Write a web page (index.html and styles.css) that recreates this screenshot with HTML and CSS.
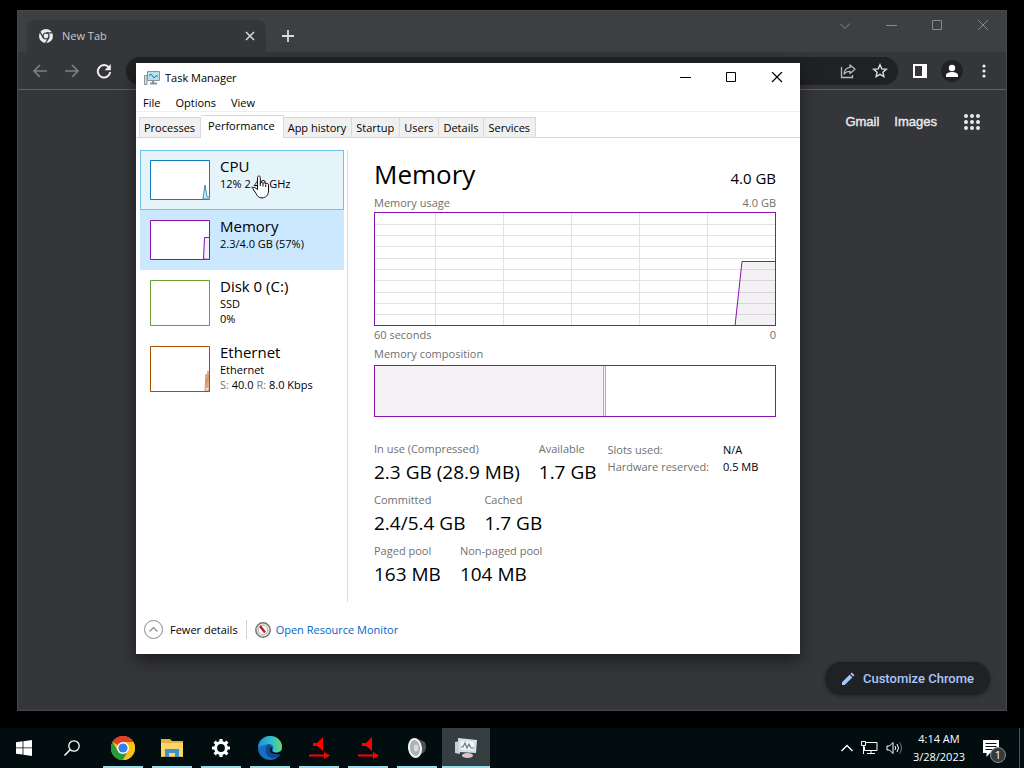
FILE: index.html
```
<!DOCTYPE html>
<html lang="en">
<head>
  <meta charset="UTF-8">
  <meta name="viewport" content="width=device-width, initial-scale=1.0">
  <title>Desktop</title>
  <link rel="stylesheet" href="styles.css">
</head>
<body>
<div class="desktop">

  <!-- browser -->
  <section class="chrome">
    <div class="tabstrip">
      <div class="ctab">
        <svg width="16" height="16" viewBox="0 0 16 16"><circle cx="8" cy="8" r="7" fill="#e8eaed"/><circle cx="8" cy="8" r="3.6" fill="#35363a"/><circle cx="8" cy="8" r="2.4" fill="#e8eaed"/><path d="M8 4.8h6.5M5.2 9.6L2 4M10.8 9.6L7.6 15" stroke="#35363a" stroke-width="1.2"/></svg>
        <span class="ctab-title">New Tab</span>
        <button class="icon-btn" aria-label="Close tab"><svg width="10" height="10" viewBox="0 0 10 10"><path d="M1 1l8 8M9 1L1 9" stroke="#dadce0" stroke-width="1.5"/></svg></button>
      </div>
      <button class="icon-btn newtab" aria-label="New tab"><svg width="14" height="14" viewBox="0 0 14 14"><path d="M7 1v12M1 7h12" stroke="#dadce0" stroke-width="1.8"/></svg></button>
      <div class="chrome-ctrl">
        <button class="icon-btn" aria-label="Search tabs"><svg width="12" height="12" viewBox="0 0 12 12"><path d="M1 3.5l5 5 5-5" fill="none" stroke="#85888c"/></svg></button>
        <button class="icon-btn" aria-label="Minimize"><svg width="12" height="12" viewBox="0 0 12 12"><path d="M1 5.5h11" stroke="#85888c"/></svg></button>
        <button class="icon-btn" aria-label="Maximize"><svg width="12" height="12" viewBox="0 0 12 12"><path d="M1.5.5h9v9h-9z" fill="none" stroke="#85888c"/></svg></button>
        <button class="icon-btn" aria-label="Close"><svg width="12" height="12" viewBox="0 0 12 12"><path d="M1 0l10 10M11 0L1 10" stroke="#85888c"/></svg></button>
      </div>
    </div>
    <div class="toolbar">
      <button class="icon-btn" aria-label="Back"><svg width="16" height="16" viewBox="0 0 16 16"><path d="M15 8H2M8 2L2 8l6 6" fill="none" stroke="#7d8084" stroke-width="1.7"/></svg></button>
      <button class="icon-btn" aria-label="Forward"><svg width="16" height="16" viewBox="0 0 16 16"><path d="M1 8h13M8 2l6 6-6 6" fill="none" stroke="#7d8084" stroke-width="1.7"/></svg></button>
      <button class="icon-btn" aria-label="Reload"><svg width="16" height="16" viewBox="0 0 16 16"><path d="M13 4.6A6.2 6.2 0 1 0 14.2 9" fill="none" stroke="#eee" stroke-width="2"/><path d="M14.8 1v6.2H8.6z" fill="#eee"/></svg></button>
      <div class="omnibox">
        <button class="icon-btn" aria-label="Share"><svg width="16" height="16" viewBox="0 0 16 16"><path d="M1.5 4v10.500H12.500V12" fill="none" stroke="#b8babd" stroke-width="1.3"/><path d="M10 2l5 4.300-5 4.200V8.300c-2.500 0-4.500.7-6 2.700.4-3.700 2.500-6.200 6-6.600z" fill="none" stroke="#b8babd" stroke-width="1.3" stroke-linejoin="round"/></svg></button>
        <button class="icon-btn" aria-label="Bookmark"><svg width="16" height="16" viewBox="0 0 16 16"><path d="M8 1.800l1.800 4.100 4.500.4-3.400 2.900 1 4.400L8 11.300l-3.900 2.300 1-4.400-3.400-2.900 4.500-.4z" fill="none" stroke="#dadce0" stroke-width="1.4"/></svg></button>
      </div>
      <button class="icon-btn" aria-label="Side panel"><svg width="14" height="14" viewBox="0 0 14 14"><path d="M0 0h14v14H0zM2 2v10h7V2z" fill="#fff" fill-rule="evenodd"/></svg></button>
      <button class="icon-btn profile" aria-label="Profile"><svg width="14" height="14" viewBox="0 0 14 14"><circle cx="7" cy="4" r="3.200" fill="#fff"/><path d="M1 13v-2c0-2 3.500-3 6-3s6 1 6 3v2z" fill="#fff"/></svg></button>
      <button class="icon-btn" aria-label="Menu"><svg width="4" height="14" viewBox="0 0 4 14"><circle cx="2" cy="2" r="1.600" fill="#eee"/><circle cx="2" cy="7" r="1.600" fill="#eee"/><circle cx="2" cy="12" r="1.600" fill="#eee"/></svg></button>
    </div>
    <div class="ntp">
      <nav class="ntp-links">
        <a href="#">Gmail</a>
        <a href="#">Images</a>
        <button class="icon-btn" aria-label="Google apps"><svg width="16" height="16" viewBox="0 0 16 16" fill="#e8eaed"><circle cx="2" cy="2" r="2"/><circle cx="8" cy="2" r="2"/><circle cx="14" cy="2" r="2"/><circle cx="2" cy="8" r="2"/><circle cx="8" cy="8" r="2"/><circle cx="14" cy="8" r="2"/><circle cx="2" cy="14" r="2"/><circle cx="8" cy="14" r="2"/><circle cx="14" cy="14" r="2"/></svg></button>
      </nav>
      <button class="customize"><svg width="14" height="14" viewBox="0 0 14 14" fill="#a8c7fa"><path d="M1 10.300L8.600 2.700l2.700 2.700L3.700 13H1zM9.400 1.900L10.800.5l2.700 2.700-1.400 1.400z"/></svg>Customize Chrome</button>
    </div>
  </section>

  <!-- task manager -->
  <section class="tm">
    <header class="tm-title">
      <svg width="16" height="14" viewBox="0 0 16 14"><path d="M.5 4.500h2.500v9H.5z" fill="#d7dcdf" stroke="#899399"/><path d="M3.500.5h12v9h-12z" fill="#b6e0ee" stroke="#87969e"/><path d="M5 5l2-2 3 4 2-2h2" fill="none" stroke="#267b98"/><path d="M9 10v2M6 12.500h7" stroke="#899399" stroke-width="2"/></svg>
      <h1>Task Manager</h1>
      <div class="tm-ctrl">
        <button class="icon-btn" aria-label="Minimize"><svg width="12" height="12" viewBox="0 0 12 12"><path d="M1 5.500h11" stroke="#000"/></svg></button>
        <button class="icon-btn" aria-label="Maximize"><svg width="12" height="12" viewBox="0 0 12 12"><path d="M1.500.5h9v9h-9z" fill="none" stroke="#000"/></svg></button>
        <button class="icon-btn" aria-label="Close"><svg width="12" height="12" viewBox="0 0 12 12"><path d="M1 0l10 10M11 0L1 10" stroke="#000" stroke-width="1.200"/></svg></button>
      </div>
    </header>
    <nav class="tm-menu">
      <button>File</button>
      <button>Options</button>
      <button>View</button>
    </nav>
    <div class="tm-tabs" role="tablist">
      <button role="tab">Processes</button>
      <button role="tab" class="active" aria-selected="true">Performance</button>
      <button role="tab">App history</button>
      <button role="tab">Startup</button>
      <button role="tab">Users</button>
      <button role="tab">Details</button>
      <button role="tab">Services</button>
    </div>
    <div class="tm-body">
      <div class="side">
        <button class="item hover">
          <svg class="thumb" width="60" height="40" viewBox="0 0 60 40"><path d="M.5.5h59v39H.5z" fill="#fff" stroke="#117dbb"/><path d="M53 39l2-14 2 12h3v2z" fill="#d5eaf4" stroke="#3c8fb5"/></svg>
          <span class="item-text"><b>CPU</b><span>12% 2.40 GHz</span></span>
        </button>
        <button class="item selected">
          <svg class="thumb" width="60" height="40" viewBox="0 0 60 40"><path d="M.5.5h59v39H.5z" fill="#fff" stroke="#8b12ae"/><path d="M53.500 39l1-21.500H59.500V39.500z" fill="#f6eef8" stroke="#8b12ae"/></svg>
          <span class="item-text"><b>Memory</b><span>2.3/4.0 GB (57%)</span></span>
        </button>
        <button class="item">
          <svg class="thumb" width="60" height="46" viewBox="0 0 60 46"><path d="M.5.5h59v45H.5z" fill="#fff" stroke="#6aa03a"/></svg>
          <span class="item-text"><b>Disk 0 (C:)</b><span>SSD</span><span>0%</span></span>
        </button>
        <button class="item">
          <svg class="thumb" width="60" height="46" viewBox="0 0 60 46"><path d="M55 45l1-17 1 14 1-17 1 15v5z" fill="#f8d8c6" stroke="#dd9068"/><path d="M.5.5h59v45H.5z" fill="none" stroke="#a74f01"/></svg>
          <span class="item-text"><b>Ethernet</b><span>Ethernet</span><span><i>S:</i> 40.0 <i>R:</i> 8.0 Kbps</span></span>
        </button>
      </div>
      <main class="detail">
        <div class="detail-head">
          <h2>Memory</h2>
          <span>4.0 GB</span>
        </div>
        <div class="caption"><span>Memory usage</span><span>4.0 GB</span></div>
        <svg class="chart" viewBox="0 0 400 112" preserveAspectRatio="none">
          <path class="grid" d="M60.500 0v112M128.500 0v112M196.500 0v112M264.500 0v112M332.500 0v112M0 11.500h400M0 22.500h400M0 33.500h400M0 45.500h400M0 56.500h400M0 67.500h400M0 79.500h400M0 90.500h400M0 101.500h400"/>
          <path class="usage" d="M360 113L367 48.500H401V113z"/>
        </svg>
        <div class="caption axis"><span>60 seconds</span><span>0</span></div>
        <div class="caption comp"><span>Memory composition</span></div>
        <div class="composition"><div class="in-use"></div><div class="modified"></div></div>
        <div class="stats">
          <div class="stats-main">
            <div class="stat-row">
              <div><span>In use (Compressed)</span><strong>2.3 GB (28.9 MB)</strong></div>
              <div><span>Available</span><strong>1.7 GB</strong></div>
            </div>
            <div class="stat-row">
              <div><span>Committed</span><strong>2.4/5.4 GB</strong></div>
              <div><span>Cached</span><strong>1.7 GB</strong></div>
            </div>
            <div class="stat-row">
              <div><span>Paged pool</span><strong>163 MB</strong></div>
              <div><span>Non-paged pool</span><strong>104 MB</strong></div>
            </div>
          </div>
          <table class="stats-table">
            <tr><th>Slots used:</th><td>N/A</td></tr>
            <tr><th>Hardware reserved:</th><td>0.5 MB</td></tr>
          </table>
        </div>
      </main>
    </div>
    <footer class="tm-foot">
      <button class="fewer"><svg width="19" height="19" viewBox="0 0 19 19"><circle cx="9.500" cy="9.500" r="9" fill="#fff" stroke="#8a8a8a"/><path d="M5.500 11.500l4-4 4 4" fill="none" stroke="#8a8a8a" stroke-width="1.200"/></svg>Fewer details</button>
      <a href="#" class="resmon"><svg width="16" height="16" viewBox="0 0 16 16"><circle cx="8" cy="8" r="7.200" fill="#f0eeea" stroke="#77756f" stroke-width="1.500"/><circle cx="8" cy="8" r="4.800" fill="#fff" stroke="#aaa"/><path d="M5 4l5 6.500" stroke="#c2172b" stroke-width="2.400"/></svg>Open Resource Monitor</a>
    </footer>
  </section>

  <svg class="cursor" width="18" height="24" viewBox="0 0 18 24"><path d="M5.500 14.500V2.500c0-2 2.800-2 2.800 0v6c0-1.500 2.700-1.500 2.700.2 0-1.400 2.700-1.200 2.700.4 0-1.200 2.800-1 2.800.8v6c0 4-2.700 7-6.500 7-3.500 0-4.700-2-5.700-4l-3.300-5c-.6-1.500 1-2.200 2-1.200z" fill="#fff" stroke="#111"/><path d="M8.300 8v3M11 9v2.500M13.700 9.500V12" stroke="#111"/></svg>

  <footer class="taskbar">
    <button class="task" aria-label="Start"><svg width="16" height="16" viewBox="0 0 16 16" fill="#fff"><path d="M0 2.200L6.600 1.300v6.200H0zM7.400 1.200L16 0v7.500H7.400zM0 8.300h6.600v6.300L0 13.700zM7.400 8.300H16V16l-8.600-1.200z"/></svg></button>
    <button class="task" aria-label="Search"><svg width="18" height="18" viewBox="0 0 18 18"><circle cx="11" cy="7" r="5.200" fill="none" stroke="#fff" stroke-width="1.300"/><path d="M7.200 10.800L1.500 16.500" stroke="#fff" stroke-width="1.500"/></svg></button>
    <div class="apps">
      <button class="task run" aria-label="Chrome"><svg width="24" height="24" viewBox="0 0 24 24"><circle cx="12" cy="12" r="12" fill="#fbc116"/><path d="M12 12L1.600 6A12 12 0 0 1 22.400 6H12z" fill="#e33b2e"/><path d="M1.600 6A12 12 0 0 0 12 24l5.200-9L12 12 6.800 15z" fill="#249a41"/><path d="M12 6h10.400A12 12 0 0 1 12 24l5.200-9z" fill="#fbc116"/><circle cx="12" cy="12" r="6" fill="#fff"/><circle cx="12" cy="12" r="4.600" fill="#397de8"/></svg></button>
      <button class="task run" aria-label="File Explorer"><svg width="22" height="20" viewBox="0 0 22 20"><path d="M0 1h9l2 2h11v16H0z" fill="#e7b33d"/><path d="M0 5h22v13H0z" fill="#fbd76b"/><path d="M4 19v-8h14v8h-4v-4H8v4z" fill="#3f91c9"/></svg></button>
      <button class="task run" aria-label="Settings"><svg width="20" height="20" viewBox="0 0 20 20"><circle cx="10" cy="10" r="5.400" fill="none" stroke="#fff" stroke-width="3"/><path d="M10 1v3M10 16v3M1 10h3M16 10h3M3.600 3.600l2.200 2.200M14.200 14.200l2.200 2.200M16.400 3.600l-2.200 2.200M5.800 14.200l-2.200 2.200" stroke="#fff" stroke-width="3.200"/></svg></button>
      <button class="task run" aria-label="Edge"><svg width="24" height="24" viewBox="0 0 24 24"><defs><linearGradient id="eg" x1="0" x2="1"><stop offset="0" stop-color="#1b8fdc"/><stop offset=".6" stop-color="#35c1c9"/><stop offset="1" stop-color="#68d965"/></linearGradient></defs><circle cx="12" cy="12" r="12" fill="#1470c4"/><path d="M0 11C1 4 6 0 12 0c7 0 12 5 12 10.500 0 4-3 6-6 6s-4-1.500-3-3c1.500-2 0-5.500-4-5.500-5 0-9 3-11 3z" fill="url(#eg)"/><path d="M11 8c-3 2-4 5-3 8.500 1 3.500 4 5.500 7 5.500 3 0 6-2 7.500-4-3 1.500-6 1-8 0-2.500-1.500-3-3-2-5 1-1.500.5-4-1.500-5z" fill="#114a8b"/><path d="M13.500 10.500c1.200 1.500.8 3 .3 4 1 2 4 2.500 6.200 2l4-1.500v2l-1.600 1.200c-4 1-10 0-10.400-3.700-.1-1.500 1-2 1.500-4z" fill="#020d10"/></svg></button>
      <button class="task run" aria-label="Audio 1"><svg width="22" height="24" viewBox="0 0 22 24" fill="red"><path d="M5 7h4l6-6v14l-6-5H5zM1 18.500h15V16l6 3.500-6 3.500v-2.500H1z"/></svg></button>
      <button class="task run" aria-label="Audio 2"><svg width="22" height="24" viewBox="0 0 22 24" fill="red"><path d="M5 7h4l6-6v14l-6-5H5zM1 18.500h15V16l6 3.500-6 3.500v-2.500H1z"/></svg></button>
      <button class="task run" aria-label="Volume"><svg width="20" height="22" viewBox="0 0 20 22"><path d="M8 1l8 3c4 1 4 10 0 12l-7 5z" fill="#4e5357"/><ellipse cx="8" cy="11" rx="7" ry="10" fill="#f0f1f1" transform="rotate(-8 8 11)"/><ellipse cx="8" cy="11" rx="5" ry="8" fill="#aeb2b3" transform="rotate(-8 8 11)"/><ellipse cx="9" cy="11" rx="2.300" ry="3.500" fill="#d9dbdc"/></svg></button>
      <button class="task run active" aria-label="Task Manager"><svg width="24" height="22" viewBox="0 0 24 22"><path d="M1 5l5-1v13l-5-1z" fill="#c8cfd1"/><path d="M4 1l19 2-1 13-17-1z" fill="#d7e0e2"/><path d="M7 4l13 1-.5 8L7 12.500z" fill="#eff7f8"/><path d="M7 10h2l2-4 2 5 2-4 2 4h3" fill="none" stroke="#607f8a" stroke-width="1.200"/><ellipse cx="13.500" cy="18.500" rx="5.500" ry="2.500" fill="#dbc4cb"/></svg></button>
    </div>
    <div class="tray">
      <svg width="12" height="12" viewBox="0 0 12 12"><path d="M.5 9L6 3.500 11.500 9" fill="none" stroke="#fff" stroke-width="1.400"/></svg>
      <svg width="17" height="14" viewBox="0 0 17 14" fill="none" stroke="#fff"><path d="M5 1.500h11v8H3.500V5.500M10 9.500v3M6 12.500h8"/><path d="M.5.5h4v4h-4zM2.500 5v8"/></svg>
      <svg width="17" height="14" viewBox="0 0 17 14" fill="none" stroke="#fff"><path d="M1 5h2.500L7 1.500v11L3.500 9H1zM9 5q1.500 2 0 4M11 3q3 4 0 8"/><path d="M13.500 1.500q4 5.500 0 11" stroke="#777"/></svg>
      <div class="clock"><span>4:14 AM</span><span>3/28/2023</span></div>
      <div class="notif">
        <svg width="16" height="17" viewBox="0 0 16 17"><path d="M0 0h16v13H7l-3.500 4v-4H0z" fill="#fff"/><path d="M2.500 3.500h11M2.500 6.500h11M2.500 9.500h7" stroke="#091316"/></svg>
        <span class="badge">1</span>
      </div>
    </div>
  </footer>
</div>
</body>
</html>
```
FILE: styles.css
```
* { box-sizing: border-box; }
body { margin: 0; background: #000; color: #000; font: 11px/16px "Open Sans", "Noto Sans", sans-serif; }
button { margin: 0; padding: 0; border: 0; background: none; color: inherit; font: inherit; text-align: left; }
a { text-decoration: none; }
svg { display: block; flex: none; }
h1, h2 { margin: 0; font-weight: 400; }
.desktop { position: relative; display: flex; flex-direction: column; height: 100vh; min-height: 720px; overflow: hidden; }
.icon-btn { display: flex; align-items: center; justify-content: center; }

/* browser window */
.chrome { flex: 1; display: flex; flex-direction: column; margin: 10px 17px 17px; border: 1px solid #46484b; background: #35363a; }
.tabstrip { display: flex; align-items: center; height: 41px; padding: 9px 17px 0 9px; background: #3c4043; }
.ctab { display: flex; align-items: center; width: 239px; height: 32px; padding: 0 11px; border-radius: 8px 8px 0 0; background: #35363a; color: #c6c9cd; }
.ctab-title { flex: 1; margin-left: 8px; }
.newtab { margin-left: 15px; }
.chrome-ctrl { display: flex; gap: 34px; margin-left: auto; align-self: flex-start; }
.toolbar { display: flex; align-items: center; gap: 16px; height: 38px; padding: 0 20px 0 14px; border-bottom: 1px solid #5f6368; }
.omnibox { flex: 1; display: flex; align-items: center; justify-content: flex-end; gap: 16px; height: 28px; margin: 0 -1px 0 -2px; padding-right: 10px; border-radius: 14px; background: #202124; }
.profile { width: 22px; height: 22px; margin: 0 3px 0 -2px; border-radius: 50%; background: #202124; }
.ntp { flex: 1; display: flex; flex-direction: column; justify-content: space-between; align-items: flex-end; padding: 24px 16px 15px; }
.ntp-links { display: flex; align-items: center; gap: 15px; padding-right: 10px; font-family: "Liberation Sans", sans-serif; font-size: 13px; }
.ntp-links a { color: #e8eaed; -webkit-text-stroke: 0.4px #e8eaed; }
.ntp-links .icon-btn { margin-left: 12px; }
.customize { display: flex; align-items: center; gap: 8px; height: 33px; padding: 0 16px; border-radius: 17px; background: #202124; color: #a8c7fa; font: 500 13px/16px Roboto, sans-serif; box-shadow: 0 1px 4px rgba(0, 0, 0, .4); }

/* task manager window */
.tm { position: absolute; top: 63px; left: 136px; right: 224px; background: #fff; box-shadow: 0 6px 16px rgba(0, 0, 0, .5); }
.tm-title { display: flex; align-items: center; height: 30px; padding: 0 17px 0 8px; }
.tm-title h1 { margin-left: 5px; font-size: 11px; }
.tm-ctrl { display: flex; gap: 34px; margin-left: auto; }
.tm-menu { display: flex; gap: 15px; height: 19px; padding: 2px 7px 0; border-bottom: 1px solid #eee; }
.tm-tabs { display: flex; align-items: flex-end; height: 26px; padding-left: 3px; border-bottom: 1px solid #d9d9d9; }
.tm-tabs button { height: 20px; padding: 0 5px 0 4px; border: 1px solid #d9d9d9; border-left: 0; border-bottom: 0; background: #f0f0f0; }
.tm-tabs button:first-child { border-left: 1px solid #d9d9d9; }
.tm-tabs .active { height: 23px; margin-bottom: -1px; padding: 0 8px 2px 7px; background: #fff; }
.tm-body { display: flex; padding: 12px 24px 0 4px; }
.side { width: 208px; height: 452px; padding-right: 3px; border-right: 1px solid #dcdcdc; }
.item { display: flex; width: 100%; min-height: 60px; padding: 8px 9px 9px; border: 1px solid transparent; }
.item.hover { border-color: #70c0e7; background: #e5f3fb; }
.item.selected { background: #cce8ff; }
.thumb { margin-top: 1px; }
.item-text { display: flex; flex-direction: column; margin-left: 10px; line-height: 15px; }
.item-text b { padding-bottom: 2px; font-size: 15px; font-weight: 400; line-height: 15px; }
.item-text i { color: #777; font-style: normal; }
.detail { flex: 1; margin-left: 26px; }
.detail-head { display: flex; justify-content: space-between; align-items: baseline; height: 45px; }
.detail-head h2 { font-size: 26px; line-height: 48px; }
.detail-head span { font-size: 15px; }
.caption { display: flex; justify-content: space-between; height: 17px; color: #707070; }
.chart { width: 100%; height: 114px; border: 1px solid #8b12ae; }
.chart path { vector-effect: non-scaling-stroke; }
.grid { fill: none; stroke: #e2e2e2; }
.usage { fill: rgba(80, 50, 90, .07); stroke: #8b12ae; }
.axis { height: 20px; padding-top: 1px; }
.comp { height: 19px; }
.composition { display: flex; height: 52px; border: 1px solid #8b12ae; }
.in-use { width: 57%; background: #f4f2f4; }
.modified { width: 3px; border: 1px solid #b9a9c2; border-width: 0 1px; background: #f4f2f4; }
.stats { display: flex; gap: 11px; margin-top: 24px; }
.stat-row { display: flex; gap: 19px; height: 51px; }
.stat-row span, .stat-row strong { display: block; white-space: nowrap; }
.stat-row span { color: #707070; }
.stat-row strong { font-size: 19px; font-weight: 400; line-height: 30px; }
.stats-table { align-self: flex-start; border-collapse: collapse; line-height: 17px; white-space: nowrap; }
.stats-table th { padding: 0 14px 0 0; color: #707070; font-weight: 400; text-align: left; }
.stats-table td { padding: 0; }
.tm-foot { display: flex; align-items: center; height: 52px; padding: 3px 8px 0; }
.fewer { display: flex; align-items: center; gap: 7px; padding-right: 8px; border-right: 1px solid #d0d0d0; line-height: 16px; }
.resmon { display: flex; align-items: center; gap: 5px; margin-left: 8px; color: #0066cc; }
.cursor { position: absolute; left: 252px; top: 175px; }

/* taskbar */
.taskbar { display: flex; height: 40px; background: #020d10; color: #fff; }
.task { display: flex; align-items: center; justify-content: center; width: 48px; height: 40px; }
.apps { display: flex; gap: 1px; margin-left: 3px; }
.run { background: linear-gradient(#99dbe8, #99dbe8) center bottom / 40px 2px no-repeat; }
.run.active { background-color: #353f42; background-size: 48px 2px; }
.tray { display: flex; align-items: center; gap: 8px; margin-left: auto; padding-right: 20px; border-right: 1px solid #4a5356; margin-right: 4px; }
.clock { display: flex; flex-direction: column; align-items: center; margin-left: 2px; line-height: 18px; }
.notif { position: relative; margin-left: 10px; }
.badge { position: absolute; left: 7px; top: 7px; width: 16px; height: 16px; border: 1px solid #8b8f91; border-radius: 50%; background: #343b3e; line-height: 14px; text-align: center; }
```
